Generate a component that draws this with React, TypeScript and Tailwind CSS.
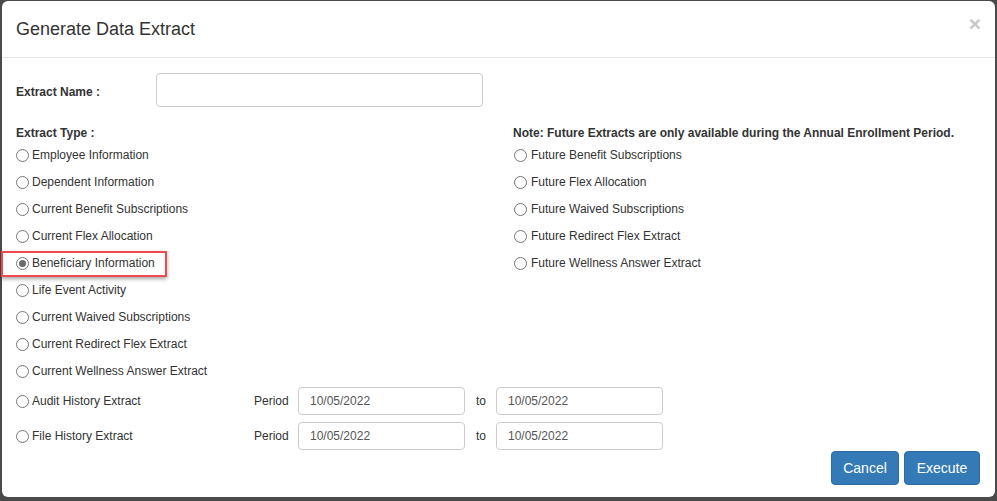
import React from 'react'

const leftTypes = [
  'Employee Information',
  'Dependent Information',
  'Current Benefit Subscriptions',
  'Current Flex Allocation',
  'Beneficiary Information',
  'Life Event Activity',
  'Current Waived Subscriptions',
  'Current Redirect Flex Extract',
  'Current Wellness Answer Extract',
]

const futureTypes = [
  'Future Benefit Subscriptions',
  'Future Flex Allocation',
  'Future Waived Subscriptions',
  'Future Redirect Flex Extract',
  'Future Wellness Answer Extract',
]

function Radio({ checked = false }: { checked?: boolean }) {
  return (
    <span className="w-[13px] h-[13px] shrink-0 rounded-full border border-[#767676] bg-white flex items-center justify-center">
      {checked && <span className="w-[7px] h-[7px] rounded-full bg-[#6b6b6b]" />}
    </span>
  )
}

function RadioRow({ label, checked = false, gap = 'gap-[3px]' }: { label: string; checked?: boolean; gap?: string }) {
  return (
    <div className="relative h-[27px] flex items-center">
      {checked && (
        <div className="absolute left-[-15px] top-[1px] w-[166px] h-[26px] border-2 border-[#ef4a4f] shadow-[0_2px_4px_rgba(0,0,0,0.35)]" />
      )}
      <label className={`flex items-center ${gap}`}>
        <Radio checked={checked} />
        <span>{label}</span>
      </label>
    </div>
  )
}

function DateBox() {
  return (
    <div className="w-[167px] h-[28px] border border-[#cccccc] rounded-[4px] flex items-center pl-[11px] text-[#555555]">
      10/05/2022
    </div>
  )
}

function PeriodRow({ label }: { label: string }) {
  return (
    <div className="h-[28px] flex items-center">
      <label className="w-[238px] flex items-center gap-[3px]">
        <Radio />
        <span>{label}</span>
      </label>
      <span className="w-[44px]">Period</span>
      <DateBox />
      <span className="w-[31px] pl-[11px]">to</span>
      <DateBox />
    </div>
  )
}

export default function App() {
  return (
    <div
      className="w-[997px] h-[501px] bg-[#4a4a4a] pl-[2px] pt-[1px] overflow-hidden text-[12px] leading-[17px] text-[#333333]"
      style={{ fontFamily: '"Liberation Sans", Arial, sans-serif' }}
    >
      <div className="w-[993px] h-[496px] bg-white rounded-[6px] flex flex-col">
        {/* Header */}
        <div className="h-[57px] border-b border-[#e5e5e5] flex items-center justify-between pl-[14px] pr-[14px]">
          <h4 className="text-[18px] leading-[20px] text-[#333333]">Generate Data Extract</h4>
          <span className="text-[21px] leading-[21px] font-bold text-[#c8c8c8] -mt-[11px]">×</span>
        </div>

        {/* Body */}
        <div className="pl-[14px] pt-[15px] flex-1">
          <div className="flex items-center h-[34px]">
            <span className="w-[140px] font-bold mt-[4px]">Extract Name :</span>
            <div className="w-[327px] h-[34px] border border-[#cccccc] rounded-[4px]" />
          </div>

          <div className="flex mt-[18px]">
            <div className="w-[497px]">
              <div className="font-bold">Extract Type :</div>
              {leftTypes.map((t) => (
                <RadioRow key={t} label={t} checked={t === 'Beneficiary Information'} />
              ))}
            </div>
            <div>
              <div className="font-bold">Note: Future Extracts are only available during the Annual Enrollment Period.</div>
              {futureTypes.map((t) => (
                <div key={t} className="pl-[1px]">
                  <RadioRow label={t} gap="gap-[4px]" />
                </div>
              ))}
            </div>
          </div>

          <div className="flex flex-col gap-[7px] mt-[2px]">
            <PeriodRow label="Audit History Extract" />
            <PeriodRow label="File History Extract" />
          </div>
        </div>

        {/* Footer */}
        <div className="flex justify-end gap-[5px] pr-[15px] pb-[12px]">
          <button className="w-[68px] h-[34px] rounded-[4px] bg-[#337ab7] border border-[#2e6da4] text-white text-[14px]">
            Cancel
          </button>
          <button className="w-[76px] h-[34px] rounded-[4px] bg-[#337ab7] border border-[#2e6da4] text-white text-[14px]">
            Execute
          </button>
        </div>
      </div>
    </div>
  )
}
